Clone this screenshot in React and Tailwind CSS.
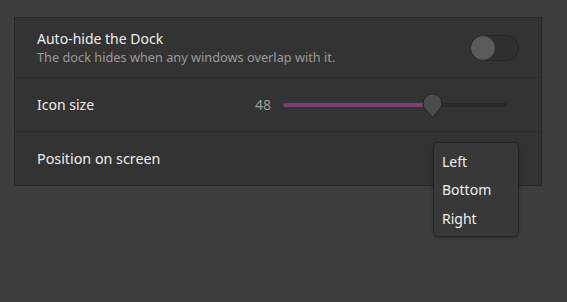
import React from 'react';

function Toggle() {
	return (
		<div className="relative h-[26px] w-[49px] rounded-full border border-[#262626] bg-[#2f2f2f]">
			<div className="absolute left-[-1px] top-[-1px] h-[26px] w-[26px] rounded-full border border-[#262626] bg-[#5a5a5a]" />
		</div>
	);
}

function Slider() {
	return (
		<div className="relative h-[26px] w-[224px]">
			<div className="absolute left-0 right-0 top-[11px] h-[4px] rounded-full border border-[#262626] bg-[#2b2b2b]" />
			<div className="absolute left-0 top-[11px] h-[4px] w-[145px] rounded-l-full bg-[#7b3f73]" />
			<svg
				className="absolute left-[139px] top-[2px]"
				width="21"
				height="26"
				viewBox="0 0 21 26"
			>
				<path
					d="M10.5 23.5 L4 16.2 A9.5 9.5 0 1 1 17 16.2 Z"
					fill="#4b4b4b"
					stroke="#1e1e1e"
					strokeWidth="1"
					strokeLinejoin="round"
				/>
			</svg>
		</div>
	);
}

export default function App() {
	return (
		<div
			className="relative h-[302px] w-[567px] overflow-hidden bg-[#3d3d3d] pl-[14px] pt-[17px] text-[#eeeeee]"
			style={{ fontFamily: '"Noto Sans", sans-serif' }}
		>
			<div className="w-[528px] border border-[#272727] bg-[#333333]">
				<div className="flex h-[60px] items-center border-b border-[#2c2c2c] pl-[22px] pr-[22px]">
					<div className="flex flex-col">
						<span className="text-[14px] leading-[19px]">Auto-hide the Dock</span>
						<span className="text-[12.75px] leading-[18px] text-[#9c9c9c]">
							The dock hides when any windows overlap with it.
						</span>
					</div>
					<div className="ml-auto">
						<Toggle />
					</div>
				</div>
				<div className="flex h-[54px] items-center border-b border-[#2c2c2c] pl-[22px] pr-[34px]">
					<span className="text-[14px]">Icon size</span>
					<div className="ml-auto flex items-center gap-[12px]">
						<span className="text-[14px] text-[#9c9c9c]">48</span>
						<Slider />
					</div>
				</div>
				<div className="flex h-[53px] items-center pl-[22px]">
					<span className="text-[14.3px]">Position on screen</span>
				</div>
			</div>
			<div className="absolute left-[433px] top-[142px] flex h-[95px] w-[86px] flex-col rounded-[5px] border border-[#242424] bg-[#383838] pl-[8px] pt-[8px] shadow-[0_1px_3px_rgba(0,0,0,0.3)]">
				<span className="h-[29px] text-[14px] leading-[22px]">Left</span>
				<span className="h-[29px] text-[14px] leading-[22px]">Bottom</span>
				<span className="h-[29px] text-[14px] leading-[22px]">Right</span>
			</div>
		</div>
	);
}
